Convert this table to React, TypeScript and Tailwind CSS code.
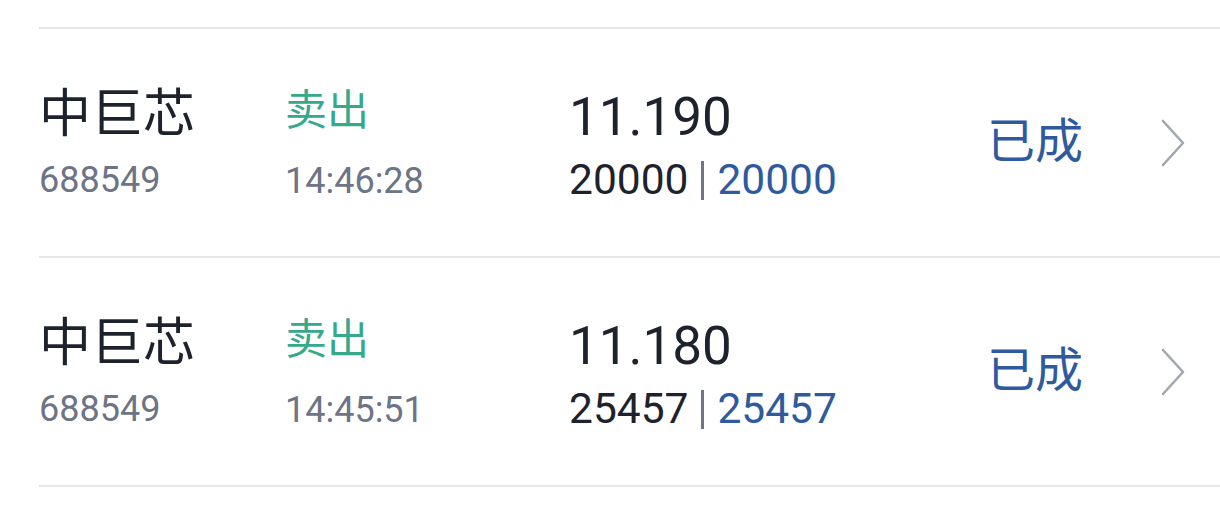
import React from 'react';

const orders = [
  { name: '中巨芯', code: '688549', side: '卖出', time: '14:46:28', price: '11.190', qty: '20000', filled: '20000', status: '已成' },
  { name: '中巨芯', code: '688549', side: '卖出', time: '14:45:51', price: '11.180', qty: '25457', filled: '25457', status: '已成' },
];

function Chevron() {
  return (
    <svg width="26" height="50" viewBox="0 0 26 50" fill="none" className="block">
      <path d="M3 3 L23 25 L3 47" stroke="#a3a7ae" strokeWidth="2.6" strokeLinecap="round" strokeLinejoin="round" />
    </svg>
  );
}

export default function App() {
  return (
    <div
      className="w-[1220px] h-[514px] bg-white overflow-hidden"
      style={{ fontFamily: 'Roboto, "Noto Sans CJK SC", sans-serif' }}
    >
      <div className="h-[27px]" />
      <div className="ml-[39px] border-t-2 border-[#e6e6e6]">
        {orders.map((o, i) => (
          <div key={i} className="flex items-center h-[229px] border-b-2 border-[#e6e6e6]">
            {/* name + code */}
            <div className="w-[246px] flex flex-col pb-[4px]">
              <div className="text-[52px] leading-[60px] text-[#1d222d] font-['Noto_Sans_CJK_SC']">{o.name}</div>
              <div className="text-[36px] leading-[44px] text-[#6c7485] mt-[18px]">{o.code}</div>
            </div>

            {/* side + time */}
            <div className="w-[284px] flex flex-col pb-[4px]">
              <div className="text-[42px] leading-[56px] text-[#36a98c] font-['Noto_Sans_CJK_SC']">{o.side}</div>
              <div className="text-[36px] leading-[44px] text-[#6c7485] mt-[24px]">{o.time}</div>
            </div>

            {/* price + qty */}
            <div className="flex-1 flex flex-col pt-[5px]">
              <div className="text-[53px] leading-[60px] text-[#1d222d]">{o.price}</div>
              <div className="text-[42.5px] leading-[46px] text-[#1d222d] flex items-center mt-[10px]">
                <span>{o.qty}</span>
                <span className="mx-[13px] inline-block w-[3px] h-[39px] bg-[#6c7485]" />
                <span className="text-[#2f5b9e]">{o.filled}</span>
              </div>
            </div>

            {/* status */}
            <div className="w-[170px] pl-[7px] pb-[12px] text-[48px] leading-[56px] text-[#2f5b9e] font-['Noto_Sans_CJK_SC']">{o.status}</div>

            <div className="w-[70px] pl-[10px] flex items-center">
              <Chevron />
            </div>
          </div>
        ))}
      </div>
    </div>
  );
}
